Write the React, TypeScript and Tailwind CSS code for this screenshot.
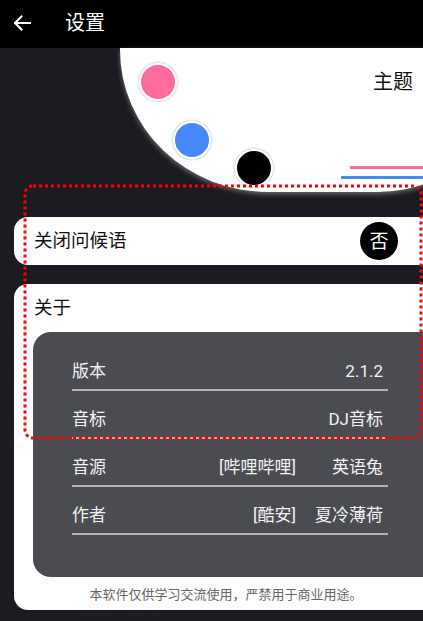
import React from "react";

type InfoRow = {
  label: string;
  tag?: string;
  value: string;
};

const rows: InfoRow[] = [
  { label: "版本", value: "2.1.2" },
  { label: "音标", value: "DJ音标" },
  { label: "音源", tag: "[哔哩哔哩]", value: "英语兔" },
  { label: "作者", tag: "[酷安]", value: "夏冷薄荷" },
];

const font = {
  fontFamily: 'Roboto, "Noto Sans CJK SC", "Noto Sans", sans-serif',
};

function BackArrow() {
  return (
    <svg width="18" height="16" viewBox="0 0 18 16" fill="none">
      <path
        d="M2 8h15M8.5 1.5 2 8l6.5 6.5"
        stroke="white"
        strokeWidth="2"
        strokeLinecap="square"
      />
    </svg>
  );
}

export default function App() {
  return (
    <div
      className="relative h-[621px] w-full overflow-hidden bg-[#1a1c21]"
      style={font}
    >
      {/* top bar */}
      <div className="flex h-12 items-center bg-black pb-[3px]">
        <div className="ml-[13px] flex">
          <BackArrow />
        </div>
        <span className="ml-[34px] text-[20px] leading-[24px] text-white">
          设置
        </span>
      </div>

      {/* theme picker */}
      <div className="relative ml-[120px] h-[144px] w-[401px] rounded-bl-[149px_143px] rounded-br-[145px] bg-white shadow-[0_2px_5px_rgba(255,255,255,0.35)]">
        <div className="absolute left-[19px] top-[15px] h-[38px] w-[38px] rounded-full border-2 border-white bg-[#ff6b9b] shadow-[0_0_3px_rgba(0,0,0,0.3)]" />
        <div className="absolute left-[53px] top-[73px] h-[38px] w-[38px] rounded-full border-2 border-white bg-[#4589fa] shadow-[0_0_3px_rgba(0,0,0,0.3)]" />
        <div className="absolute left-[115px] top-[101px] h-[38px] w-[38px] rounded-full border-2 border-white bg-black shadow-[0_0_3px_rgba(0,0,0,0.3)]" />
        <span className="absolute left-[253px] top-[22px] text-[20px] leading-[24px] text-[#111]">
          主题
        </span>
        <div className="absolute left-[230px] top-[118px] h-[3px] w-[90px] bg-[#ff6b9b]" />
        <div className="absolute left-[221px] top-[128px] h-[3px] w-[100px] bg-[#4589fa]" />
      </div>

      {/* greeting toggle */}
      <div className="ml-[14px] mt-[25px] flex h-12 w-[424px] items-center justify-between rounded-[14px] bg-white pl-[20px] pr-[40px]">
        <span className="text-[18.5px] leading-[24px] text-[#111]">
          关闭问候语
        </span>
        <div className="flex h-[38px] w-[38px] items-center justify-center rounded-full bg-black text-[19px] leading-none text-white">
          否
        </div>
      </div>

      {/* about */}
      <div className="ml-[14px] mt-[19px] w-[424px] rounded-[14px] bg-white pb-[6px] pt-[12px]">
        <div className="pl-[20px] text-[18.5px] leading-[24px] text-[#111]">
          关于
        </div>
        <div className="ml-[19px] mt-[12px] rounded-l-[18px] bg-[#4b4c52] pb-[42px] pl-[39px] pr-[50px] pt-[11px]">
          {rows.map((row) => (
            <div
              key={row.label}
              className="border-b-2 border-[#b3b3b6] pb-[6px] pt-[16px]"
            >
              <div className="flex items-center pr-[5px] text-[17px] leading-[24px] text-[#f2f2f2]">
                <span className="flex-1">{row.label}</span>
                {row.tag && <span>{row.tag}</span>}
                <span className="w-[87px] text-right">{row.value}</span>
              </div>
            </div>
          ))}
        </div>
        <div className="mt-[9px] text-center text-[13px] leading-[18px] text-[#666]">
          本软件仅供学习交流使用，严禁用于商业用途。
        </div>
      </div>

      {/* dotted highlight */}
      <svg
        className="absolute left-[23px] top-[184px]"
        width="402"
        height="256"
        viewBox="0 0 402 256"
        fill="none"
      >
        <rect
          x="2"
          y="2"
          width="396"
          height="252"
          rx="8"
          stroke="#ff0000"
          strokeWidth="3"
          strokeDasharray="3 3"
        />
      </svg>
    </div>
  );
}
